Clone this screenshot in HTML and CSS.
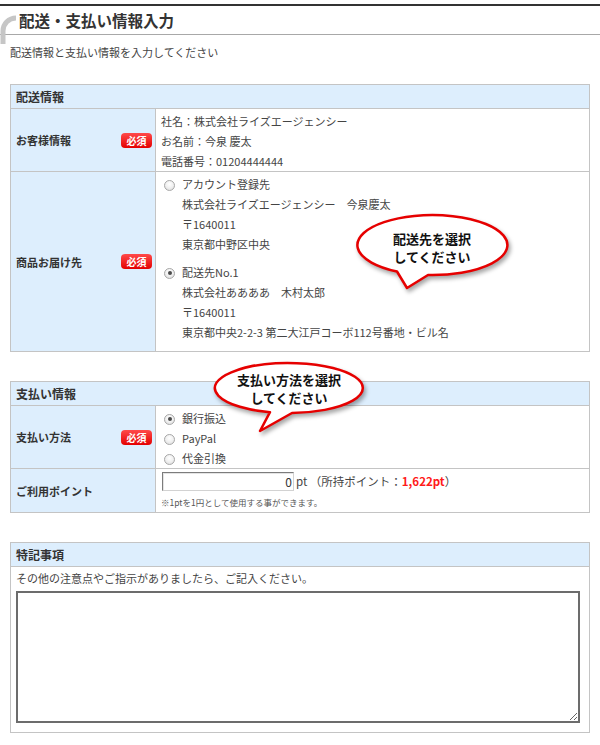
FILE: index.html
```html
<!DOCTYPE html>
<html lang="ja">
<head>
<meta charset="utf-8">
<title>配送・支払い情報入力</title>
<link rel="stylesheet" href="styles.css">
</head>
<body>
<div class="page">
  <header class="page-title">
    <svg class="title-arc" width="18" height="30" viewBox="0 0 18 30"><path d="M3 30 L3 17 A 13 13 0 0 1 16 4" fill="none" stroke="#c6c6c6" stroke-width="5"/></svg>
    <h1>配送・支払い情報入力</h1>
  </header>

  <main class="content">
    <p class="lead">配送情報と支払い情報を入力してください</p>

    <table class="form-table">
      <colgroup><col class="col-label"><col></colgroup>
      <tr><th class="sec-head" colspan="2">配送情報</th></tr>
      <tr>
        <th class="label"><div class="label-inner"><span>お客様情報</span><span class="req">必須</span></div></th>
        <td class="value info">
          <div>社名：株式会社ライズエージェンシー</div>
          <div>お名前：今泉 慶太</div>
          <div>電話番号：01204444444</div>
        </td>
      </tr>
      <tr>
        <th class="label"><div class="label-inner"><span>商品お届け先</span><span class="req">必須</span></div></th>
        <td class="value addresses">
          <div class="addr">
            <div class="opt"><span class="radio"></span>アカウント登録先</div>
            <div class="sub">株式会社ライズエージェンシー　今泉慶太</div>
            <div class="sub">〒1640011</div>
            <div class="sub">東京都中野区中央</div>
          </div>
          <div class="addr">
            <div class="opt"><span class="radio checked"></span>配送先No.1</div>
            <div class="sub">株式会社ああああ　木村太郎</div>
            <div class="sub">〒1640011</div>
            <div class="sub">東京都中央2-2-3 第二大江戸コーボ112号番地・ビル名</div>
          </div>
        </td>
      </tr>
    </table>

    <table class="form-table section-gap">
      <colgroup><col class="col-label"><col></colgroup>
      <tr><th class="sec-head" colspan="2">支払い情報</th></tr>
      <tr>
        <th class="label"><div class="label-inner"><span>支払い方法</span><span class="req">必須</span></div></th>
        <td class="value pay">
          <div class="opt"><span class="radio checked"></span>銀行振込</div>
          <div class="opt"><span class="radio"></span>PayPal</div>
          <div class="opt"><span class="radio"></span>代金引換</div>
        </td>
      </tr>
      <tr>
        <th class="label"><div class="label-inner"><span>ご利用ポイント</span></div></th>
        <td class="value points">
          <div class="points-line">
            <input class="pt-input" type="text" value="0">
            <span class="pt-unit">pt （所持ポイント：<span class="held">1,622pt</span>）</span>
          </div>
          <div class="pt-note">※1ptを1円として使用する事ができます。</div>
        </td>
      </tr>
    </table>

    <table class="form-table section-gap">
      <tr><th class="sec-head">特記事項</th></tr>
      <tr>
        <td class="value notes">
          <div class="notes-lead">その他の注意点やご指示がありましたら、ご記入ください。</div>
          <textarea class="notes-area"></textarea>
        </td>
      </tr>
    </table>
  </main>

  <div class="bubble bubble-ship">
    <svg class="bubble-shape" width="170" height="90" viewBox="0 0 170 90"><path d="M47 63.5 L57 80 L78 67 A 75 30 0 1 0 47 63.5 Z" fill="#fff" stroke="#e60000" stroke-width="2.5" stroke-linejoin="round"/></svg>
    <div class="bubble-text"><div>配送先を選択</div><div>してください</div></div>
  </div>

  <div class="bubble bubble-pay">
    <svg class="bubble-shape" width="170" height="84" viewBox="0 0 170 84"><path d="M63 56.2 L53 75 L85 57 A 74 25 0 1 0 63 56.2 Z" fill="#fff" stroke="#e60000" stroke-width="2.5" stroke-linejoin="round"/></svg>
    <div class="bubble-text"><div>支払い方法を選択</div><div>してください</div></div>
  </div>
</div>
</body>
</html>
```

FILE: styles.css
```css
* { box-sizing: border-box; }

html, body {
  margin: 0;
  padding: 0;
  background: #fff;
}

body {
  font-family: "Noto Sans CJK JP", "Noto Sans", sans-serif;
  color: #444;
  width: 600px;
}

.page {
  position: relative;
  padding-top: 4px;
}

.page-title {
  position: relative;
  border-top: 2px solid #333;
  border-bottom: 1px solid #a8a8a8;
  height: 31px;
}

.title-arc {
  position: absolute;
  left: 0;
  top: 8px;
}

.page-title h1 {
  margin: 0;
  padding-left: 19px;
  font-size: 15.5px;
  font-weight: bold;
  line-height: 28px;
  color: #333;
}

.content {
  padding: 0 10px;
}

.lead {
  margin: 9px 0 0;
  font-size: 11px;
  line-height: 16px;
}

.form-table {
  width: 580px;
  margin-top: 24px;
  border-collapse: collapse;
  table-layout: fixed;
  border: 1px solid #bcbcbc;
}

.section-gap { margin-top: 29px; }

.col-label { width: 145px; }

.form-table th,
.form-table td {
  border: 1px solid #c4c4c4;
}

.sec-head {
  background: #ddeefd;
  text-align: left;
  font-size: 12px;
  font-weight: bold;
  color: #333;
  padding: 2px 5px;
  line-height: 19px;
}

.label {
  background: #ddeefd;
  text-align: left;
  vertical-align: middle;
  padding: 0 3px 0 5px;
  font-size: 11px;
  font-weight: bold;
  color: #333;
}

.label-inner {
  display: flex;
  justify-content: space-between;
  align-items: center;
}

.req {
  display: inline-block;
  width: 31px;
  height: 15px;
  line-height: 15px;
  text-align: center;
  font-size: 10px;
  font-weight: bold;
  color: #fff;
  background: linear-gradient(#ff4a4a, #e40000);
  border-radius: 4px;
}

.value {
  vertical-align: top;
  font-size: 11px;
  line-height: 20px;
  color: #444;
  padding: 2px 5px 0;
}

.addresses { padding: 2px 5px 9px; }

.addr + .addr { margin-top: 8px; }

.opt {
  display: flex;
  align-items: center;
}

.sub { padding-left: 21px; }

.radio {
  position: relative;
  display: inline-block;
  width: 11px;
  height: 11px;
  margin: 2px 7px 0 3px;
  border: 1px solid #a8a8a8;
  border-radius: 50%;
  background: radial-gradient(circle at 50% 35%, #fff 0%, #f2f2f2 45%, #d8d8d8 100%);
  flex: none;
}

.radio.checked::after {
  content: "";
  position: absolute;
  left: 2.5px;
  top: 2.5px;
  width: 4px;
  height: 4px;
  border-radius: 50%;
  background: #4a4a4a;
}

.points { padding: 3px 5px 3px; }

.points-line {
  display: flex;
  align-items: center;
  height: 19px;
}

.pt-input {
  width: 132px;
  height: 19px;
  margin: 0 2px 0 1px;
  padding: 0 1px 0 0;
  border-style: solid;
  border-width: 1px;
  border-color: #7c7c7c #d2d2d2 #d2d2d2 #7c7c7c;
  box-shadow: inset 1px 1px 0 #e4e4e4;
  text-align: right;
  font-family: "Noto Sans CJK JP", sans-serif;
  font-size: 12px;
  color: #333;
  background: #fff;
}

.pt-unit {
  font-size: 11.5px;
  line-height: 19px;
}

.held {
  color: #ff1a1a;
  font-weight: bold;
}

.pt-note {
  margin-top: 4px;
  font-size: 8.5px;
  line-height: 14px;
  color: #555;
}

.notes { padding: 3px 5px 9px; }

.notes-lead {
  line-height: 16px;
}

.notes-area {
  display: block;
  width: 564px;
  height: 132px;
  margin-top: 5px;
  border: 2px solid #6c6c6c;
  background: #fff;
  font-family: "Noto Sans CJK JP", sans-serif;
}

.bubble {
  position: absolute;
  width: 170px;
}

.bubble-shape {
  position: absolute;
  left: 0;
  top: 0;
  filter: drop-shadow(2px 3px 2px rgba(0, 0, 0, 0.35));
}

.bubble-text {
  position: relative;
  width: 164px;
  text-align: center;
  font-size: 13px;
  font-weight: bold;
  color: #111;
  line-height: 18px;
}

.bubble-ship {
  left: 350px;
  top: 208px;
  height: 90px;
}

.bubble-ship .bubble-text {
  padding-top: 22px;
}

.bubble-pay {
  left: 207px;
  top: 356px;
  height: 84px;
}

.bubble-pay .bubble-text {
  padding-top: 15px;
}
```
